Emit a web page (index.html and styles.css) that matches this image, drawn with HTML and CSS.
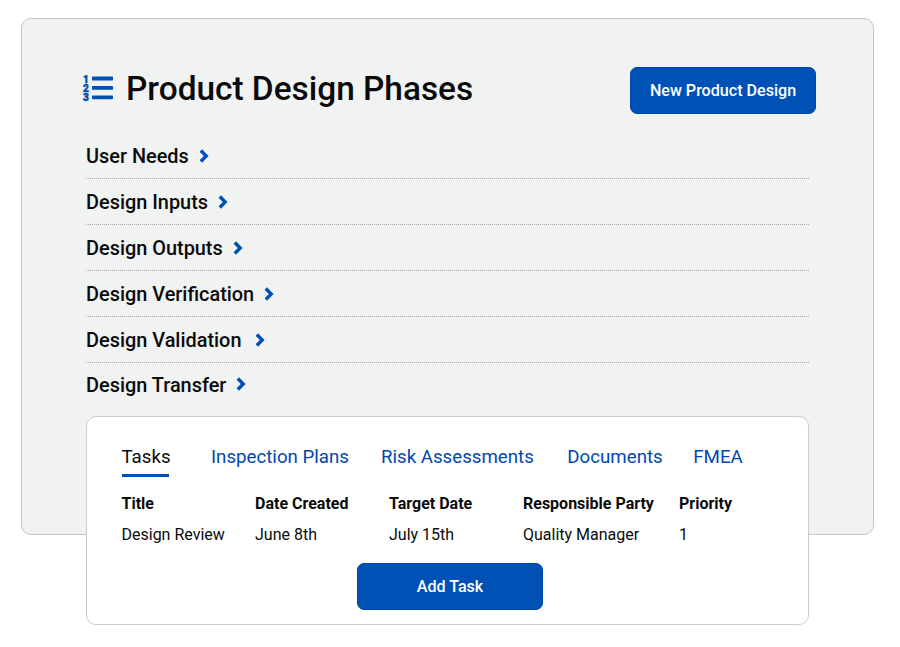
FILE: index.html
```
<!DOCTYPE html>
<html lang="en">
<head>
<meta charset="utf-8">
<title>Product Design Phases</title>
<link rel="stylesheet" href="styles.css">
</head>
<body>
<main class="panel">
  <header class="head">
    <div class="head-title">
      <svg class="list-icon" width="32" height="28" viewBox="0 0 32 28" aria-hidden="true">
        <rect x="10" y="1.6" width="21" height="3.8" rx="0.6" fill="#0051b5"/>
        <rect x="10" y="11" width="21" height="3.8" rx="0.6" fill="#0051b5"/>
        <rect x="10" y="20.4" width="21" height="3.8" rx="0.6" fill="#0051b5"/>
        <text x="1" y="7.6" class="num">1</text>
        <text x="1" y="17" class="num">2</text>
        <text x="1" y="26.4" class="num">3</text>
      </svg>
      <h1>Product Design Phases</h1>
    </div>
    <button class="btn btn-new">New Product Design</button>
  </header>
  <ul class="phases">
    <li><span>User Needs</span><svg class="chev" width="10" height="14" viewBox="0 0 10 14"><path d="M1.8 1.5l5.4 5.5-5.4 5.5" /></svg></li>
    <li><span>Design Inputs</span><svg class="chev" width="10" height="14" viewBox="0 0 10 14"><path d="M1.8 1.5l5.4 5.5-5.4 5.5" /></svg></li>
    <li><span>Design Outputs</span><svg class="chev" width="10" height="14" viewBox="0 0 10 14"><path d="M1.8 1.5l5.4 5.5-5.4 5.5" /></svg></li>
    <li><span>Design Verification</span><svg class="chev" width="10" height="14" viewBox="0 0 10 14"><path d="M1.8 1.5l5.4 5.5-5.4 5.5" /></svg></li>
    <li><span>Design Validation</span><svg class="chev chev-wide" width="10" height="14" viewBox="0 0 10 14"><path d="M1.8 1.5l5.4 5.5-5.4 5.5" /></svg></li>
    <li><span>Design Transfer</span><svg class="chev" width="10" height="14" viewBox="0 0 10 14"><path d="M1.8 1.5l5.4 5.5-5.4 5.5" /></svg></li>
  </ul>
  <section class="card">
    <nav class="tabs">
      <a class="tab active t1">Tasks</a>
      <a class="tab t2">Inspection Plans</a>
      <a class="tab t3">Risk Assessments</a>
      <a class="tab t4">Documents</a>
      <a class="tab">FMEA</a>
    </nav>
    <div class="table">
      <div class="th">Title</div><div class="th">Date Created</div><div class="th">Target Date</div><div class="th">Responsible Party</div><div class="th">Priority</div>
      <div class="td">Design Review</div><div class="td">June 8th</div><div class="td">July 15th</div><div class="td">Quality Manager</div><div class="td">1</div>
    </div>
    <div class="actions"><button class="btn btn-add">Add Task</button></div>
  </section>
</main>
</body>
</html>
```
FILE: styles.css
```
* { box-sizing: border-box; }
html, body { margin: 0; padding: 0; background: #fff; }
body { font-family: Roboto, "Liberation Sans", sans-serif; color: #0b0b0b; height: 647px; overflow: hidden; padding: 18px 0 0 21px; }
.panel {
  width: 853px; height: 517px;
  background: #f1f3f3;
  border: 1px solid #c4c6c6;
  border-radius: 10px;
  padding: 48px 0 0 64px;
}
.head { display: flex; justify-content: space-between; align-items: flex-start; width: 730px; }
.head-title { display: flex; align-items: center; margin-left: -4px; height: 44px; }
.list-icon { margin-right: 12px; }
.num { font: 900 10px Roboto, sans-serif; fill: #0051b5; stroke: #0051b5; stroke-width: 0.5; }
h1 { margin: 0; font-size: 33.4px; font-weight: 500; line-height: 44px; color: #0b0b0b; white-space: nowrap; }
.btn { background: #0051b5; color: #fff; border: 1px solid #0048a6; border-radius: 7px; font-family: Roboto, sans-serif; font-weight: 500; font-size: 16.1px; }
.btn-new { width: 186px; height: 47px; padding-bottom: 2px; }
.phases { list-style: none; margin: 19px 0 0; padding: 0; width: 723px; }
.phases li { height: 46px; display: flex; align-items: center; font-size: 19.9px; font-weight: 500; border-bottom: 1px dotted #a9abab; }
.phases li span { padding-top: 2px; }
.phases li:last-child { border-bottom: 0; height: 53px; padding-bottom: 11px; }
.chev { margin-left: 10px; }
.chev-wide { margin-left: 14px; }
.chev path { fill: none; stroke: #0051b5; stroke-width: 3.4; }
.card {
  width: 723px; height: 209px;
  background: #fff;
  border: 1px solid #c9cbcb;
  border-radius: 10px;
  padding: 27px 0 0 34.5px;
}
.tabs { display: flex; font-size: 18.7px; }
.tab { color: #0048b0; line-height: 26px; height: 33px; white-space: nowrap; }
.tab.active { color: #0b0b0b; border-bottom: 3px solid #0051b5; }
.t1 { margin-right: 42.5px; width: 47px; }
.t2 { margin-right: 32px; }
.t3 { margin-right: 33.5px; }
.t4 { margin-right: 30.5px; }
.table { display: grid; grid-template-columns: 133.5px 134px 134px 156px 90px; margin-top: 15px; font-size: 16px; }
.th { font-weight: 700; line-height: 24px; white-space: nowrap; }
.td { line-height: 24px; margin-top: 7px; white-space: nowrap; }
.actions { margin-top: 16px; padding-right: 29.5px; display: flex; justify-content: center; }
.btn-add { width: 186px; height: 47px; padding-bottom: 2px; }
```
